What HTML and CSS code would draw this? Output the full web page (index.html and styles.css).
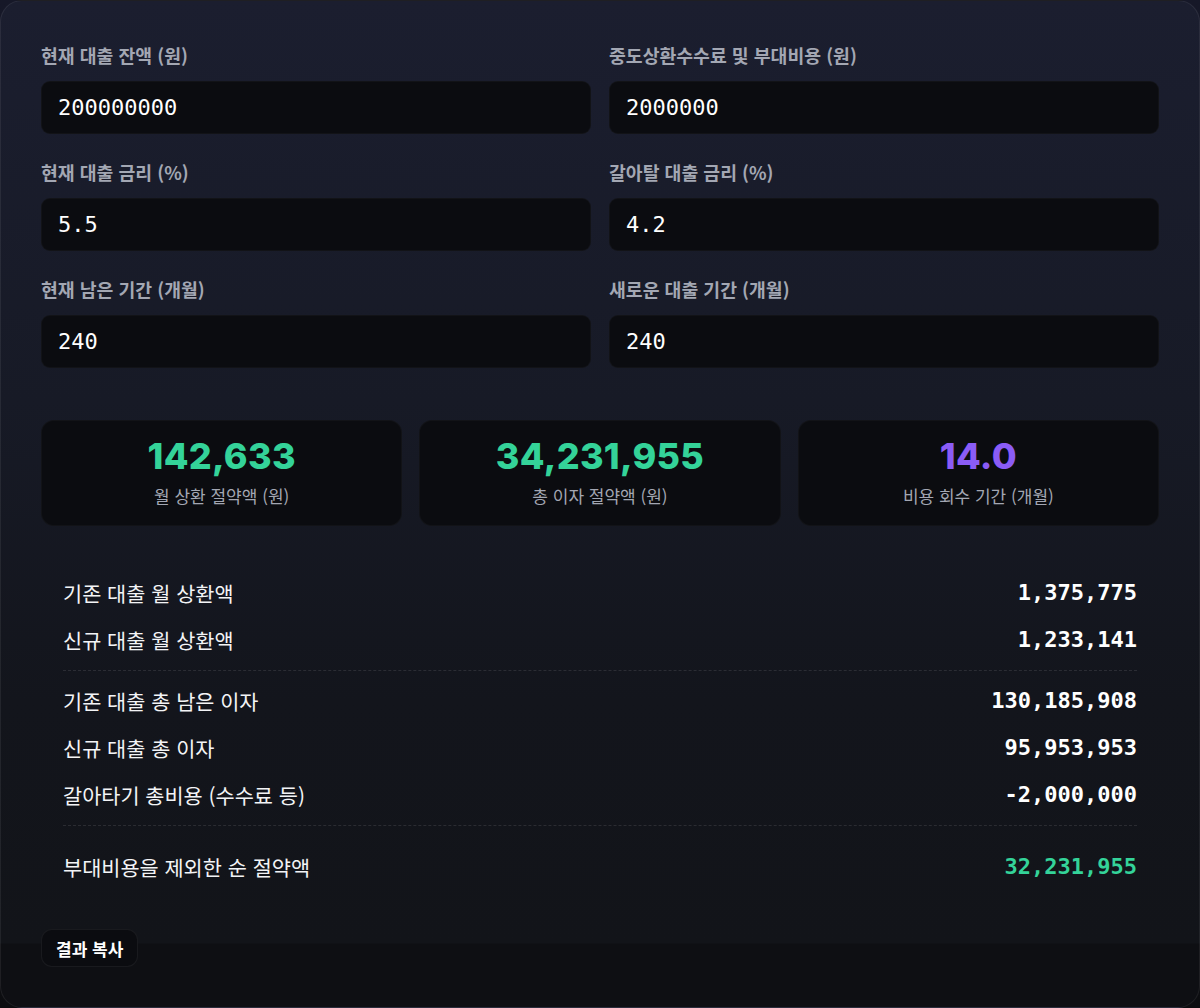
FILE: index.html
```html
<!DOCTYPE html>
<html lang="ko">
<head>
<meta charset="utf-8">
<title>대환 대출 계산기</title>
<link rel="stylesheet" href="styles.css">
</head>
<body>
<main class="card">
  <section class="fields">
    <label class="field">
      <span class="field-label">현재 대출 잔액 (원)</span>
      <input class="field-input" type="text" value="200000000">
    </label>
    <label class="field">
      <span class="field-label">중도상환수수료 및 부대비용 (원)</span>
      <input class="field-input" type="text" value="2000000">
    </label>
    <label class="field">
      <span class="field-label">현재 대출 금리 (%)</span>
      <input class="field-input" type="text" value="5.5">
    </label>
    <label class="field">
      <span class="field-label">갈아탈 대출 금리 (%)</span>
      <input class="field-input" type="text" value="4.2">
    </label>
    <label class="field">
      <span class="field-label">현재 남은 기간 (개월)</span>
      <input class="field-input" type="text" value="240">
    </label>
    <label class="field">
      <span class="field-label">새로운 대출 기간 (개월)</span>
      <input class="field-input" type="text" value="240">
    </label>
  </section>

  <section class="stats">
    <div class="stat">
      <div class="stat-value green">142,633</div>
      <div class="stat-label">월 상환 절약액 (원)</div>
    </div>
    <div class="stat">
      <div class="stat-value green">34,231,955</div>
      <div class="stat-label">총 이자 절약액 (원)</div>
    </div>
    <div class="stat">
      <div class="stat-value purple">14.0</div>
      <div class="stat-label">비용 회수 기간 (개월)</div>
    </div>
  </section>

  <section class="breakdown">
    <div class="row"><span>기존 대출 월 상환액</span><span class="num">1,375,775</span></div>
    <div class="row"><span>신규 대출 월 상환액</span><span class="num">1,233,141</span></div>
    <hr class="divider">
    <div class="row"><span>기존 대출 총 남은 이자</span><span class="num">130,185,908</span></div>
    <div class="row"><span>신규 대출 총 이자</span><span class="num">95,953,953</span></div>
    <div class="row"><span>갈아타기 총비용 (수수료 등)</span><span class="num">-2,000,000</span></div>
    <hr class="divider">
    <div class="row total"><span>부대비용을 제외한 순 절약액</span><span class="num green">32,231,955</span></div>
  </section>

  <div class="actions">
    <button class="copy-btn" type="button">결과 복사</button>
  </div>
</main>
</body>
</html>
```

FILE: styles.css
```css
* {
  box-sizing: border-box;
}

html, body {
  margin: 0;
  height: 100%;
}

body {
  background: linear-gradient(180deg, #161828 0%, #111219 60%, #0c0d10 100%);
  font-family: "Noto Sans CJK KR", "Noto Sans", sans-serif;
  color: #f3f4f6;
}

.card {
  width: 1200px;
  height: 1008px;
  border: 1px solid rgba(255, 255, 255, 0.07);
  border-radius: 22px;
  padding: 42px 40px 0 40px;
  background:
    linear-gradient(180deg, #1b1e2f 0px, #171a26 400px, #13151c 700px, #121419 942px, #0e0f13 943px, #0e0f13 100%);
  overflow: hidden;
}

/* input grid */
.fields {
  display: grid;
  grid-template-columns: 1fr 1fr;
  column-gap: 18px;
  row-gap: 26px;
}

.field {
  display: flex;
  flex-direction: column;
  gap: 13px;
}

.field-label {
  font-size: 18.3px;
  line-height: 25px;
  font-weight: 700;
  color: #a3a7b3;
}

.field-input {
  height: 53px;
  border: 1px solid rgba(255, 255, 255, 0.03);
  border-radius: 9px;
  background: #0b0c10;
  color: #ffffff;
  font-family: "DejaVu Sans Mono", monospace;
  font-size: 22px;
  padding: 0 16px;
  outline: none;
}

/* summary cards */
.stats {
  display: grid;
  grid-template-columns: repeat(3, 1fr);
  gap: 17px;
  margin-top: 52px;
}

.stat {
  height: 106px;
  border-radius: 13px;
  background: #0b0c10;
  border: 1px solid rgba(255, 255, 255, 0.03);
  display: flex;
  flex-direction: column;
  align-items: center;
  padding-top: 13px;
}

.stat-value {
  font-family: "Inter", "Noto Sans CJK KR", sans-serif;
  font-size: 36px;
  line-height: 44px;
  font-weight: 800;
  letter-spacing: 0.3px;
}

.stat-label {
  margin-top: 6px;
  font-size: 17px;
  line-height: 24px;
  color: #a3a7b3;
}

.green {
  color: #34d399;
}

.purple {
  color: #8b5cf6;
}

/* breakdown list */
.breakdown {
  margin-top: 43px;
  padding: 0 22px;
}

.row {
  display: flex;
  justify-content: space-between;
  align-items: center;
  height: 47px;
  font-size: 20.8px;
  color: #f3f4f6;
}

.num {
  font-family: "DejaVu Sans Mono", monospace;
  font-size: 22px;
  font-weight: 700;
  color: #ffffff;
}

.num.green {
  color: #34d399;
}

.divider {
  border: 0;
  border-top: 1px dashed rgba(255, 255, 255, 0.1);
  margin: 7px 0 6px 0;
}

.divider + .row.total {
  margin-top: 17px;
}

/* footer */
.actions {
  margin-top: 39px;
}

.copy-btn {
  height: 38px;
  padding: 0 14px;
  border-radius: 11px;
  border: 1px solid rgba(255, 255, 255, 0.06);
  background: #0b0c10;
  color: #ffffff;
  font-family: "Noto Sans CJK KR", sans-serif;
  font-size: 17px;
  font-weight: 700;
}
```
